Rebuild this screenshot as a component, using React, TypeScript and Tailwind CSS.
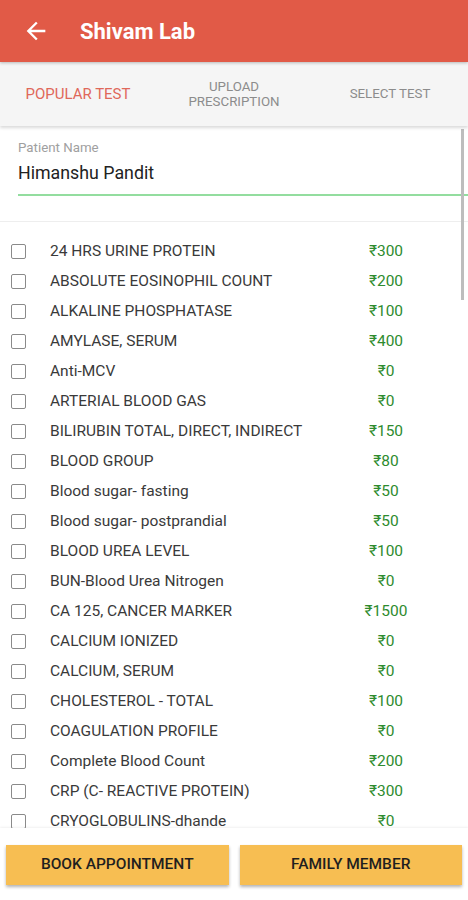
import React from "react";

const tests: [string, string][] = [
  ["24 HRS URINE PROTEIN", "300"],
  ["ABSOLUTE EOSINOPHIL COUNT", "200"],
  ["ALKALINE PHOSPHATASE", "100"],
  ["AMYLASE, SERUM", "400"],
  ["Anti-MCV", "0"],
  ["ARTERIAL BLOOD GAS", "0"],
  ["BILIRUBIN TOTAL, DIRECT, INDIRECT", "150"],
  ["BLOOD GROUP", "80"],
  ["Blood sugar- fasting", "50"],
  ["Blood sugar- postprandial", "50"],
  ["BLOOD UREA LEVEL", "100"],
  ["BUN-Blood Urea Nitrogen", "0"],
  ["CA 125, CANCER MARKER", "1500"],
  ["CALCIUM IONIZED", "0"],
  ["CALCIUM, SERUM", "0"],
  ["CHOLESTEROL - TOTAL", "100"],
  ["COAGULATION PROFILE", "0"],
  ["Complete Blood Count", "200"],
  ["CRP (C- REACTIVE PROTEIN)", "300"],
  ["CRYOGLOBULINS-dhande", "0"],
];

const BackArrow = () => (
  <svg width="28" height="28" viewBox="0 0 24 24" fill="white">
    <path d="M20 11H7.83l5.59-5.59L12 4l-8 8 8 8 1.41-1.41L7.83 13H20v-2z" />
  </svg>
);

export default function App() {
  return (
    <div
      className="relative flex h-[900px] w-[468px] flex-col overflow-hidden bg-white"
      style={{ fontFamily: "Roboto, 'Liberation Sans', sans-serif" }}
    >
      {/* header */}
      <div className="z-20 flex h-[62px] shrink-0 items-center bg-[#e15a47] shadow-[0_1px_3px_rgba(0,0,0,0.25)]">
        <div className="ml-[22px] flex items-center">
          <BackArrow />
        </div>
        <h1 className="ml-[30px] text-[22px] font-bold text-white">Shivam Lab</h1>
      </div>

      {/* tabs */}
      <div className="z-10 grid h-[64px] shrink-0 grid-cols-3 items-center bg-[#f5f5f5] shadow-[0_2px_3px_rgba(0,0,0,0.15)]">
        <div className="text-center text-[15px] text-[#e0685a]">POPULAR TEST</div>
        <div className="text-center text-[13.3px] leading-[15px] text-[#8c8c8c]">
          UPLOAD
          <br />
          PRESCRIPTION
        </div>
        <div className="text-center text-[13.3px] text-[#8c8c8c]">SELECT TEST</div>
      </div>

      {/* patient */}
      <div className="h-[96px] shrink-0 border-b border-[#eeeeee] pl-[18px] pt-[14px]">
        <div className="text-[13.3px] leading-[16px] text-[#a0a0a0]">Patient Name</div>
        <div className="mt-[4px] text-[17.8px] leading-[26px] text-[#222222]">Himanshu Pandit</div>
        <div className="mt-[8px] h-[2px] bg-[#93dd9f]" />
      </div>

      {/* list */}
      <div className="flex-1 overflow-hidden pt-[14px]">
        {tests.map(([name, price]) => (
          <div key={name} className="flex h-[30px] items-start pt-[7px] last:h-[23px]">
            <div className="ml-[11px] mt-[0.5px] h-[15px] w-[15px] rounded-[2px] border-[1.5px] border-[#8a8a8a]" />
            <div className="ml-[24px] flex-1 text-[15.5px] leading-[16px] text-[#3a3a3a]">{name}</div>
            <div className="mr-[42px] w-[80px] text-center text-[15.5px] leading-[16px] text-[#2e8b2e]">₹{price}</div>
          </div>
        ))}
      </div>

      {/* footer */}
      <div className="z-10 flex h-[72px] shrink-0 gap-[11px] bg-white px-[6px] pt-[17px] shadow-[0_-1px_2px_rgba(0,0,0,0.06)]">
        <button className="flex h-[40px] flex-1 items-center justify-center bg-[#f7be52] text-[15.5px] font-medium leading-none text-[#1f1f1f] shadow-[0_2px_3px_rgba(0,0,0,0.3)]">
          BOOK APPOINTMENT
        </button>
        <button className="flex h-[40px] flex-1 items-center justify-center bg-[#f7be52] text-[15.5px] font-medium leading-none text-[#1f1f1f] shadow-[0_2px_3px_rgba(0,0,0,0.3)]">
          FAMILY MEMBER
        </button>
      </div>

      {/* scrollbar */}
      <div className="absolute left-[461px] top-[129px] h-[171px] w-[3px] bg-[#bdbdbd]" />
    </div>
  );
}
